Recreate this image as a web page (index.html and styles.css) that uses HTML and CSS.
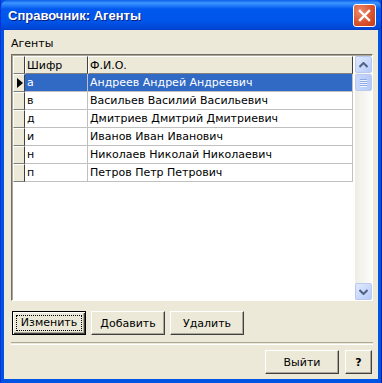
FILE: index.html
```html
<!DOCTYPE html>
<html lang="ru">
<head>
    <meta charset="UTF-8">
    <title>Справочник: Агенты</title>
    <link rel="stylesheet" href="styles.css">
</head>
<body>
    <div class="window">
        <div class="titlebar">
            <span class="title">Справочник: Агенты</span>
            <span class="close-btn">
                <svg width="13" height="13" viewBox="0 0 13 13">
                    <path d="M2 2 L11 11 M11 2 L2 11" stroke="#fff" stroke-width="2.4" stroke-linecap="square"/>
                </svg>
            </span>
        </div>
        <div class="client">
            <div class="group-label">Агенты</div>
            <div class="grid">
                <div class="grid-body">
                    <div class="grid-row header">
                        <div class="cell ind"></div>
                        <div class="cell code">Шифр</div>
                        <div class="cell name">Ф.И.О.</div>
                    </div>
                    <div class="grid-row selected">
                        <div class="cell ind"><span class="arrow"></span></div>
                        <div class="cell code">а</div>
                        <div class="cell name">Андреев Андрей Андреевич</div>
                    </div>
                    <div class="grid-row">
                        <div class="cell ind"></div>
                        <div class="cell code">в</div>
                        <div class="cell name">Васильев Василий Васильевич</div>
                    </div>
                    <div class="grid-row">
                        <div class="cell ind"></div>
                        <div class="cell code">д</div>
                        <div class="cell name">Дмитриев Дмитрий Дмитриевич</div>
                    </div>
                    <div class="grid-row">
                        <div class="cell ind"></div>
                        <div class="cell code">и</div>
                        <div class="cell name">Иванов Иван Иванович</div>
                    </div>
                    <div class="grid-row">
                        <div class="cell ind"></div>
                        <div class="cell code">н</div>
                        <div class="cell name">Николаев Николай Николаевич</div>
                    </div>
                    <div class="grid-row">
                        <div class="cell ind"></div>
                        <div class="cell code">п</div>
                        <div class="cell name">Петров Петр Петрович</div>
                    </div>
                </div>
                <div class="scrollbar">
                    <div class="sb-btn">
                        <svg width="9" height="6" viewBox="0 0 9 6"><path d="M0.5 5 L4.5 1 L8.5 5" fill="none" stroke="#4D6185" stroke-width="2"/></svg>
                    </div>
                    <div class="sb-thumb">
                        <span></span><span></span><span></span><span></span>
                    </div>
                    <div class="sb-track"></div>
                    <div class="sb-btn">
                        <svg width="9" height="6" viewBox="0 0 9 6"><path d="M0.5 1 L4.5 5 L8.5 1" fill="none" stroke="#4D6185" stroke-width="2"/></svg>
                    </div>
                </div>
            </div>
            <div class="actions">
                <button class="btn default"><span class="focus">Изменить</span></button>
                <button class="btn">Добавить</button>
                <button class="btn">Удалить</button>
            </div>
            <div class="separator"></div>
            <div class="footer">
                <button class="btn">Выйти</button>
                <button class="btn small"><b>?</b></button>
            </div>
        </div>
    </div>
</body>
</html>
```

FILE: styles.css
```css
body {
    margin: 0;
    font-family: 'DejaVu Sans', Verdana, sans-serif;
    font-size: 11px;
}
.window {
    width: 382px;
    height: 383px;
    box-sizing: border-box;
    background: #0054E3;
    border-left: 1px solid #0831D9;
    border-right: 1px solid #001EA0;
    display: flex;
    flex-direction: column;
    padding: 0 3px 4px 3px;
}
.titlebar {
    height: 30px;
    margin: 0 -3px;
    padding: 0 5px 0 7px;
    display: flex;
    align-items: center;
    justify-content: space-between;
    background: linear-gradient(#0A5FE8 0%, #3D95FF 10%, #0058EE 30%, #0055EA 70%, #0046D6 95%, #003DC5 100%);
    border-radius: 7px 7px 0 0;
}
.title {
    color: #fff;
    font-family: 'Liberation Sans', Arial, sans-serif;
    font-weight: bold;
    font-size: 13px;
    text-shadow: 1px 1px 0 #0A1E7A;
}
.close-btn {
    width: 21px;
    height: 21px;
    border: 1px solid #fff;
    border-radius: 3px;
    background: radial-gradient(circle at 30% 30%, #EC8C6E, #D8502C 60%, #C13E1A);
    display: flex;
    align-items: center;
    justify-content: center;
    margin-top: 1px;
}
.client {
    flex: 1;
    background: #ECE9D8;
    padding: 8px 5px 0 7px;
    display: flex;
    flex-direction: column;
}
.group-label {
    height: 16px;
    line-height: 12px;
}
.grid {
    height: 247px;
    box-sizing: border-box;
    border-top: 1px solid #716F64;
    border-left: 1px solid #716F64;
    border-right: 1px solid #fff;
    border-bottom: 1px solid #fff;
    box-shadow: inset 1px 1px 0 #ACA899;
    background: #fff;
    display: flex;
    padding: 1px 0 0 1px;
}
.grid-body {
    flex: 1;
}
.grid-row {
    display: flex;
    height: 18px;
}
.cell {
    box-sizing: border-box;
    height: 18px;
    line-height: 17px;
    padding-left: 2px;
    border-right: 1px solid #C0C0C0;
    border-bottom: 1px solid #C0C0C0;
    white-space: nowrap;
    overflow: hidden;
}
.ind {
    width: 12px;
    background: #ECE9D8;
    border-top: 1px solid #fff;
    border-left: 1px solid #fff;
    border-right: 1px solid #404040;
    border-bottom: 1px solid #808080;
    padding: 0;
    display: flex;
    align-items: center;
    justify-content: center;
}
.code {
    width: 63px;
}
.name {
    width: 265px;
}
.header .cell {
    background: #ECE9D8;
    border-top: 1px solid #fff;
    border-left: 1px solid #fff;
    border-right: 1px solid #404040;
    border-bottom: 1px solid #808080;
    padding-left: 1px;
}
.selected .code,
.selected .name {
    background: #316AC5;
    color: #fff;
}
.arrow {
    width: 0;
    height: 0;
    border-top: 5px solid transparent;
    border-bottom: 5px solid transparent;
    border-left: 6px solid #000;
    margin-left: 1px;
}
.scrollbar {
    width: 17px;
    display: flex;
    flex-direction: column;
    background: linear-gradient(to right, #EEEDE5, #FCFCFA);
}
.sb-btn {
    height: 17px;
    box-sizing: border-box;
    border: 1px solid #B9C9EF;
    border-radius: 2px;
    background: linear-gradient(to bottom right, #E1EAFE, #B6CBFA);
    display: flex;
    align-items: center;
    justify-content: center;
}
.sb-thumb {
    height: 17px;
    box-sizing: border-box;
    margin-top: 1px;
    border: 1px solid #B9C9EF;
    border-radius: 2px;
    background: linear-gradient(to right, #C9D8FC, #B5C9F8);
    display: flex;
    flex-direction: column;
    align-items: center;
    justify-content: center;
    gap: 1px;
}
.sb-thumb span {
    width: 7px;
    height: 1px;
    background: #8EA9E8;
    box-shadow: 0 1px 0 #EEF4FE;
}
.sb-track {
    flex: 1;
}
.actions {
    display: flex;
    gap: 5px;
    margin-top: 10px;
    padding-left: 1px;
}
.btn {
    width: 74px;
    height: 24px;
    font-family: 'DejaVu Sans', Verdana, sans-serif;
    font-size: 11px;
    color: #000;
    background: #ECE9D8;
    border-top: 1px solid #fff;
    border-left: 1px solid #fff;
    border-right: 1px solid #404040;
    border-bottom: 1px solid #404040;
    box-shadow: inset -1px -1px 0 #ACA899;
    padding: 0;
}
.btn.default {
    border: 1px solid #000;
    box-shadow: inset 1px 1px 0 #fff, inset -1px -1px 0 #404040, inset -2px -2px 0 #ACA899;
}
.focus {
    display: block;
    margin: 0 3px;
    line-height: 14px;
    border: 1px dotted #000;
}
.separator {
    margin-top: 7px;
    height: 1px;
    border-top: 1px solid #ACA899;
    border-bottom: 1px solid #fff;
}
.footer {
    display: flex;
    justify-content: flex-end;
    gap: 6px;
    margin-top: 5px;
    padding-right: 1px;
}
.btn.small {
    width: 27px;
}
```
